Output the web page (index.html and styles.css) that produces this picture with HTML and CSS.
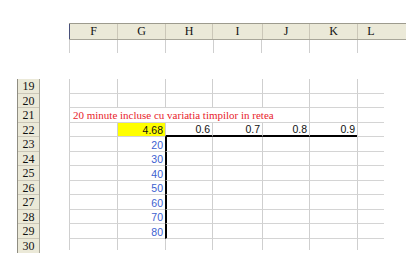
FILE: index.html
```html
<!DOCTYPE html>
<html lang="ro">
<head>
    <meta charset="UTF-8">
    <title>Foaie de calcul</title>
    <link rel="stylesheet" href="styles.css">
</head>
<body>
    <div class="sheet">
        <div class="col-head">
            <div class="ch first">F</div>
            <div class="ch">G</div>
            <div class="ch w47">H</div>
            <div class="ch w50">I</div>
            <div class="ch w47">J</div>
            <div class="ch">K</div>
            <div class="ch last">L</div>
        </div>
        <div class="top-grid">
            <div class="tc"></div>
            <div class="tc"></div>
            <div class="tc w47"></div>
            <div class="tc w50"></div>
            <div class="tc w47"></div>
            <div class="tc"></div>
            <div class="tc last"></div>
        </div>

        <div class="main">
            <div class="row-heads">
                <div class="rh">19</div>
                <div class="rh">20</div>
                <div class="rh">21</div>
                <div class="rh">22</div>
                <div class="rh">23</div>
                <div class="rh">24</div>
                <div class="rh">25</div>
                <div class="rh">26</div>
                <div class="rh">27</div>
                <div class="rh">28</div>
                <div class="rh">29</div>
                <div class="rh">30</div>
            </div>
            <div class="grid">
                <!-- 19 -->
                <div class="c"></div><div class="c"></div><div class="c"></div><div class="c"></div><div class="c"></div><div class="c"></div><div class="c"></div>
                <!-- 20 -->
                <div class="c"></div><div class="c"></div><div class="c"></div><div class="c"></div><div class="c"></div><div class="c"></div><div class="c"></div>
                <!-- 21 -->
                <div class="c title">20 minute incluse cu variatia timpilor in retea</div><div class="c"></div><div class="c"></div>
                <!-- 22 -->
                <div class="c"></div>
                <div class="c num yellow">4.68</div>
                <div class="c num under">0.6</div>
                <div class="c num under">0.7</div>
                <div class="c num under">0.8</div>
                <div class="c num under">0.9</div>
                <div class="c"></div>
                <!-- 23 - 29 -->
                <div class="c"></div><div class="c num blue">20</div><div class="c side"></div><div class="c"></div><div class="c"></div><div class="c"></div><div class="c"></div>
                <div class="c"></div><div class="c num blue">30</div><div class="c side"></div><div class="c"></div><div class="c"></div><div class="c"></div><div class="c"></div>
                <div class="c"></div><div class="c num blue">40</div><div class="c side"></div><div class="c"></div><div class="c"></div><div class="c"></div><div class="c"></div>
                <div class="c"></div><div class="c num blue">50</div><div class="c side"></div><div class="c"></div><div class="c"></div><div class="c"></div><div class="c"></div>
                <div class="c"></div><div class="c num blue">60</div><div class="c side"></div><div class="c"></div><div class="c"></div><div class="c"></div><div class="c"></div>
                <div class="c"></div><div class="c num blue">70</div><div class="c side"></div><div class="c"></div><div class="c"></div><div class="c"></div><div class="c"></div>
                <div class="c"></div><div class="c num blue">80</div><div class="c side"></div><div class="c"></div><div class="c"></div><div class="c"></div><div class="c"></div>
                <!-- 30 -->
                <div class="c"></div><div class="c"></div><div class="c"></div><div class="c"></div><div class="c"></div><div class="c"></div><div class="c"></div>
            </div>
        </div>
    </div>
</body>
</html>
```

FILE: styles.css
```css
body {
    margin: 0;
    background-color: #ffffff;
    font-family: "Liberation Sans", Arial, sans-serif;
}
.sheet {
    padding-top: 23px;
}

/* column letters */
.col-head {
    display: flex;
    margin-left: 69px;
    height: 15px;
    background-color: #ebe9d8;
    border-top: 1px solid #9d9b8e;
    border-bottom: 1px solid #a8a699;
}
.ch {
    box-sizing: border-box;
    width: 48px;
    border-left: 1px solid #cbc7b8;
    font-family: "Liberation Serif", "Times New Roman", serif;
    font-size: 12px;
    line-height: 15px;
    text-align: center;
    color: #111;
}
.ch.first {
    border-left-color: #48507a;
}
.w47 { width: 47px; }
.w50 { width: 50px; }
.ch.last, .tc.last {
    width: 27px;
}

.top-grid {
    display: flex;
    margin-left: 69px;
    height: 13px;
}
.tc {
    box-sizing: border-box;
    width: 48px;
    border-left: 1px solid #cfcfcf;
}

/* rows */
.main {
    display: flex;
    align-items: flex-start;
    margin-top: 26px;
}
.row-heads {
    margin-left: 17px;
    width: 21px;
    border-left: 1px solid #8f8d82;
    border-right: 1px solid #a8a699;
    background-color: #ebe9d8;
    display: grid;
    grid-template-rows: repeat(11, 14.5px) 14px;
}
.rh {
    box-sizing: border-box;
    border-bottom: 1px solid #cbc7b8;
    font-family: "Liberation Serif", "Times New Roman", serif;
    font-size: 12px;
    line-height: 14px;
    text-align: center;
    color: #111;
    overflow: hidden;
}
.rh:last-child {
    border-bottom: none;
}

.grid {
    margin-left: 29px;
    display: grid;
    grid-template-columns: 48px 48px 47px 50px 47px 48px 27px;
    grid-template-rows: repeat(11, 14.5px) 11px;
}
.c {
    box-sizing: border-box;
    border-left: 1px solid #cfcfcf;
    border-bottom: 1px solid #d4d4d4;
    display: flex;
    align-items: flex-end;
    justify-content: flex-end;
    padding-right: 2px;
    font-size: 10.5px;
    line-height: 12px;
    color: #111;
    white-space: nowrap;
}
.grid > .c:nth-last-child(-n+7) {
    border-bottom: none;
}
.c.title {
    grid-column: span 5;
    justify-content: flex-start;
    padding-left: 3px;
    font-family: "Liberation Serif", "Times New Roman", serif;
    font-size: 11px;
    line-height: 13px;
    color: #e8232b;
}
.c.yellow {
    background-color: #ffff00;
}
.c.blue {
    color: #3c5fd0;
}
.c.under {
    border-bottom: 2px solid #000;
}
.c.side {
    border-left: 2px solid #000;
}
```
